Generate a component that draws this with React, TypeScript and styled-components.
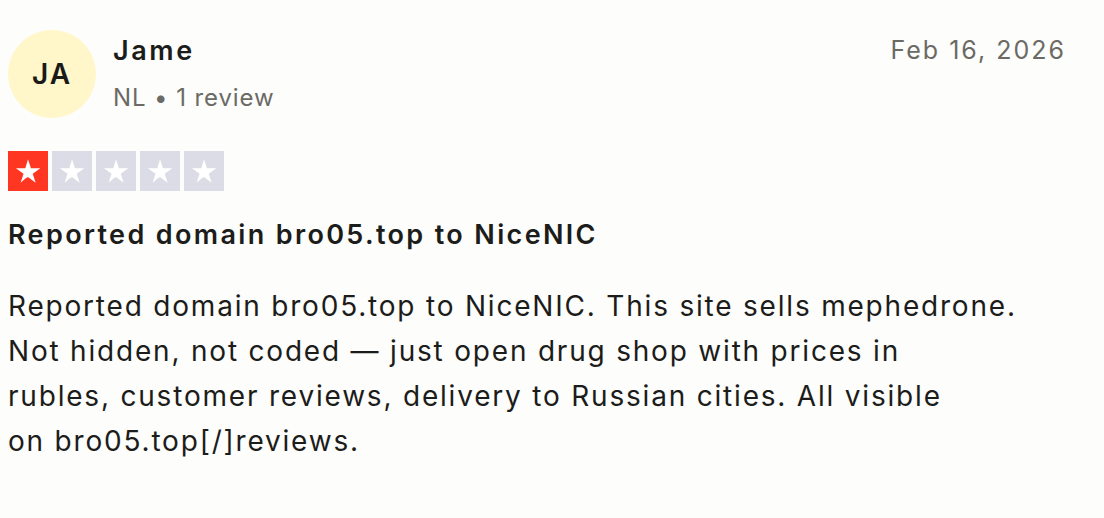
import React from 'react'
import styled, { createGlobalStyle } from 'styled-components'

const GlobalStyle = createGlobalStyle`
    html, body {
        margin: 0;
        padding: 0;
        background: #fdfdfc;
    }
    body {
        font-family: Inter, "Liberation Sans", Arial, sans-serif;
        color: #1c1c1a;
    }
`;

const Card = styled.article`
    width: 1104px;
    height: 518px;
    box-sizing: border-box;
    padding: 30px 38px 0 8px;
`;

const Header = styled.header`
    display: flex;
    align-items: flex-start;
`;

const Avatar = styled.div`
    width: 88px;
    height: 88px;
    border-radius: 50%;
    background-color: #fff6c9;
    display: flex;
    align-items: center;
    justify-content: center;
    font-size: 28px;
    font-weight: 600;
    letter-spacing: 2px;
    color: #1a1a18;
    flex-shrink: 0;
`;

const Consumer = styled.div`
    margin-left: 17px;
    display: flex;
    flex-direction: column;
    flex: 1;
`;

const Name = styled.span`
    font-size: 27px;
    font-weight: 600;
    line-height: 42px;
    letter-spacing: 2.6px;
`;

const Meta = styled.span`
    font-size: 24px;
    line-height: 34px;
    color: #6b6a64;
    margin-top: 9px;
    letter-spacing: 0.9px;
`;

const DateText = styled.time`
    font-size: 25px;
    line-height: 40px;
    color: #6b6a64;
    letter-spacing: 2px;
`;

const Stars = styled.div`
    display: flex;
    gap: 4px;
    margin-top: 33px;
`;

const StarBox = styled.div<{ $filled: boolean }>`
    width: 40px;
    height: 40px;
    background-color: ${p => (p.$filled ? '#ff3722' : '#dcdce6')};
    display: flex;
    align-items: center;
    justify-content: center;
`;

const Title = styled.h2`
    margin: 24px 0 0;
    font-size: 27px;
    font-weight: 600;
    line-height: 40px;
    letter-spacing: 2.35px;
`;

const Body = styled.p`
    margin: 29px 0 0;
    font-size: 28px;
    line-height: 45px;
    letter-spacing: 1.8px;
    white-space: pre-line;
`;

function Star() {
    return (
        <svg width="30" height="30" viewBox="0 0 24 24">
            <path
                fill="#fff"
                d="M12 2.6l2.35 7.15h7.5l-6.07 4.4 2.32 7.15L12 16.85l-1.3.95.3-.95 1.6-1.2L6.1 21.3l2.32-7.15-6.07-4.4h7.5z"
            />
        </svg>
    )
}

const bodyText = `Reported domain bro05.top to NiceNIC. This site sells mephedrone.
Not hidden, not coded — just open drug shop with prices in
rubles, customer reviews, delivery to Russian cities. All visible
on bro05.top[/]reviews.`;

export default function App() {
    const rating = 1;
    return (
        <>
            <GlobalStyle />
            <Card>
                <Header>
                    <Avatar>JA</Avatar>
                    <Consumer>
                        <Name>Jame</Name>
                        <Meta>NL • 1 review</Meta>
                    </Consumer>
                    <DateText>Feb 16, 2026</DateText>
                </Header>
                <Stars>
                    {[1, 2, 3, 4, 5].map(i => (
                        <StarBox key={i} $filled={i <= rating}>
                            <Star />
                        </StarBox>
                    ))}
                </Stars>
                <Title>Reported domain bro05.top to NiceNIC</Title>
                <Body>{bodyText}</Body>
            </Card>
        </>
    )
}
